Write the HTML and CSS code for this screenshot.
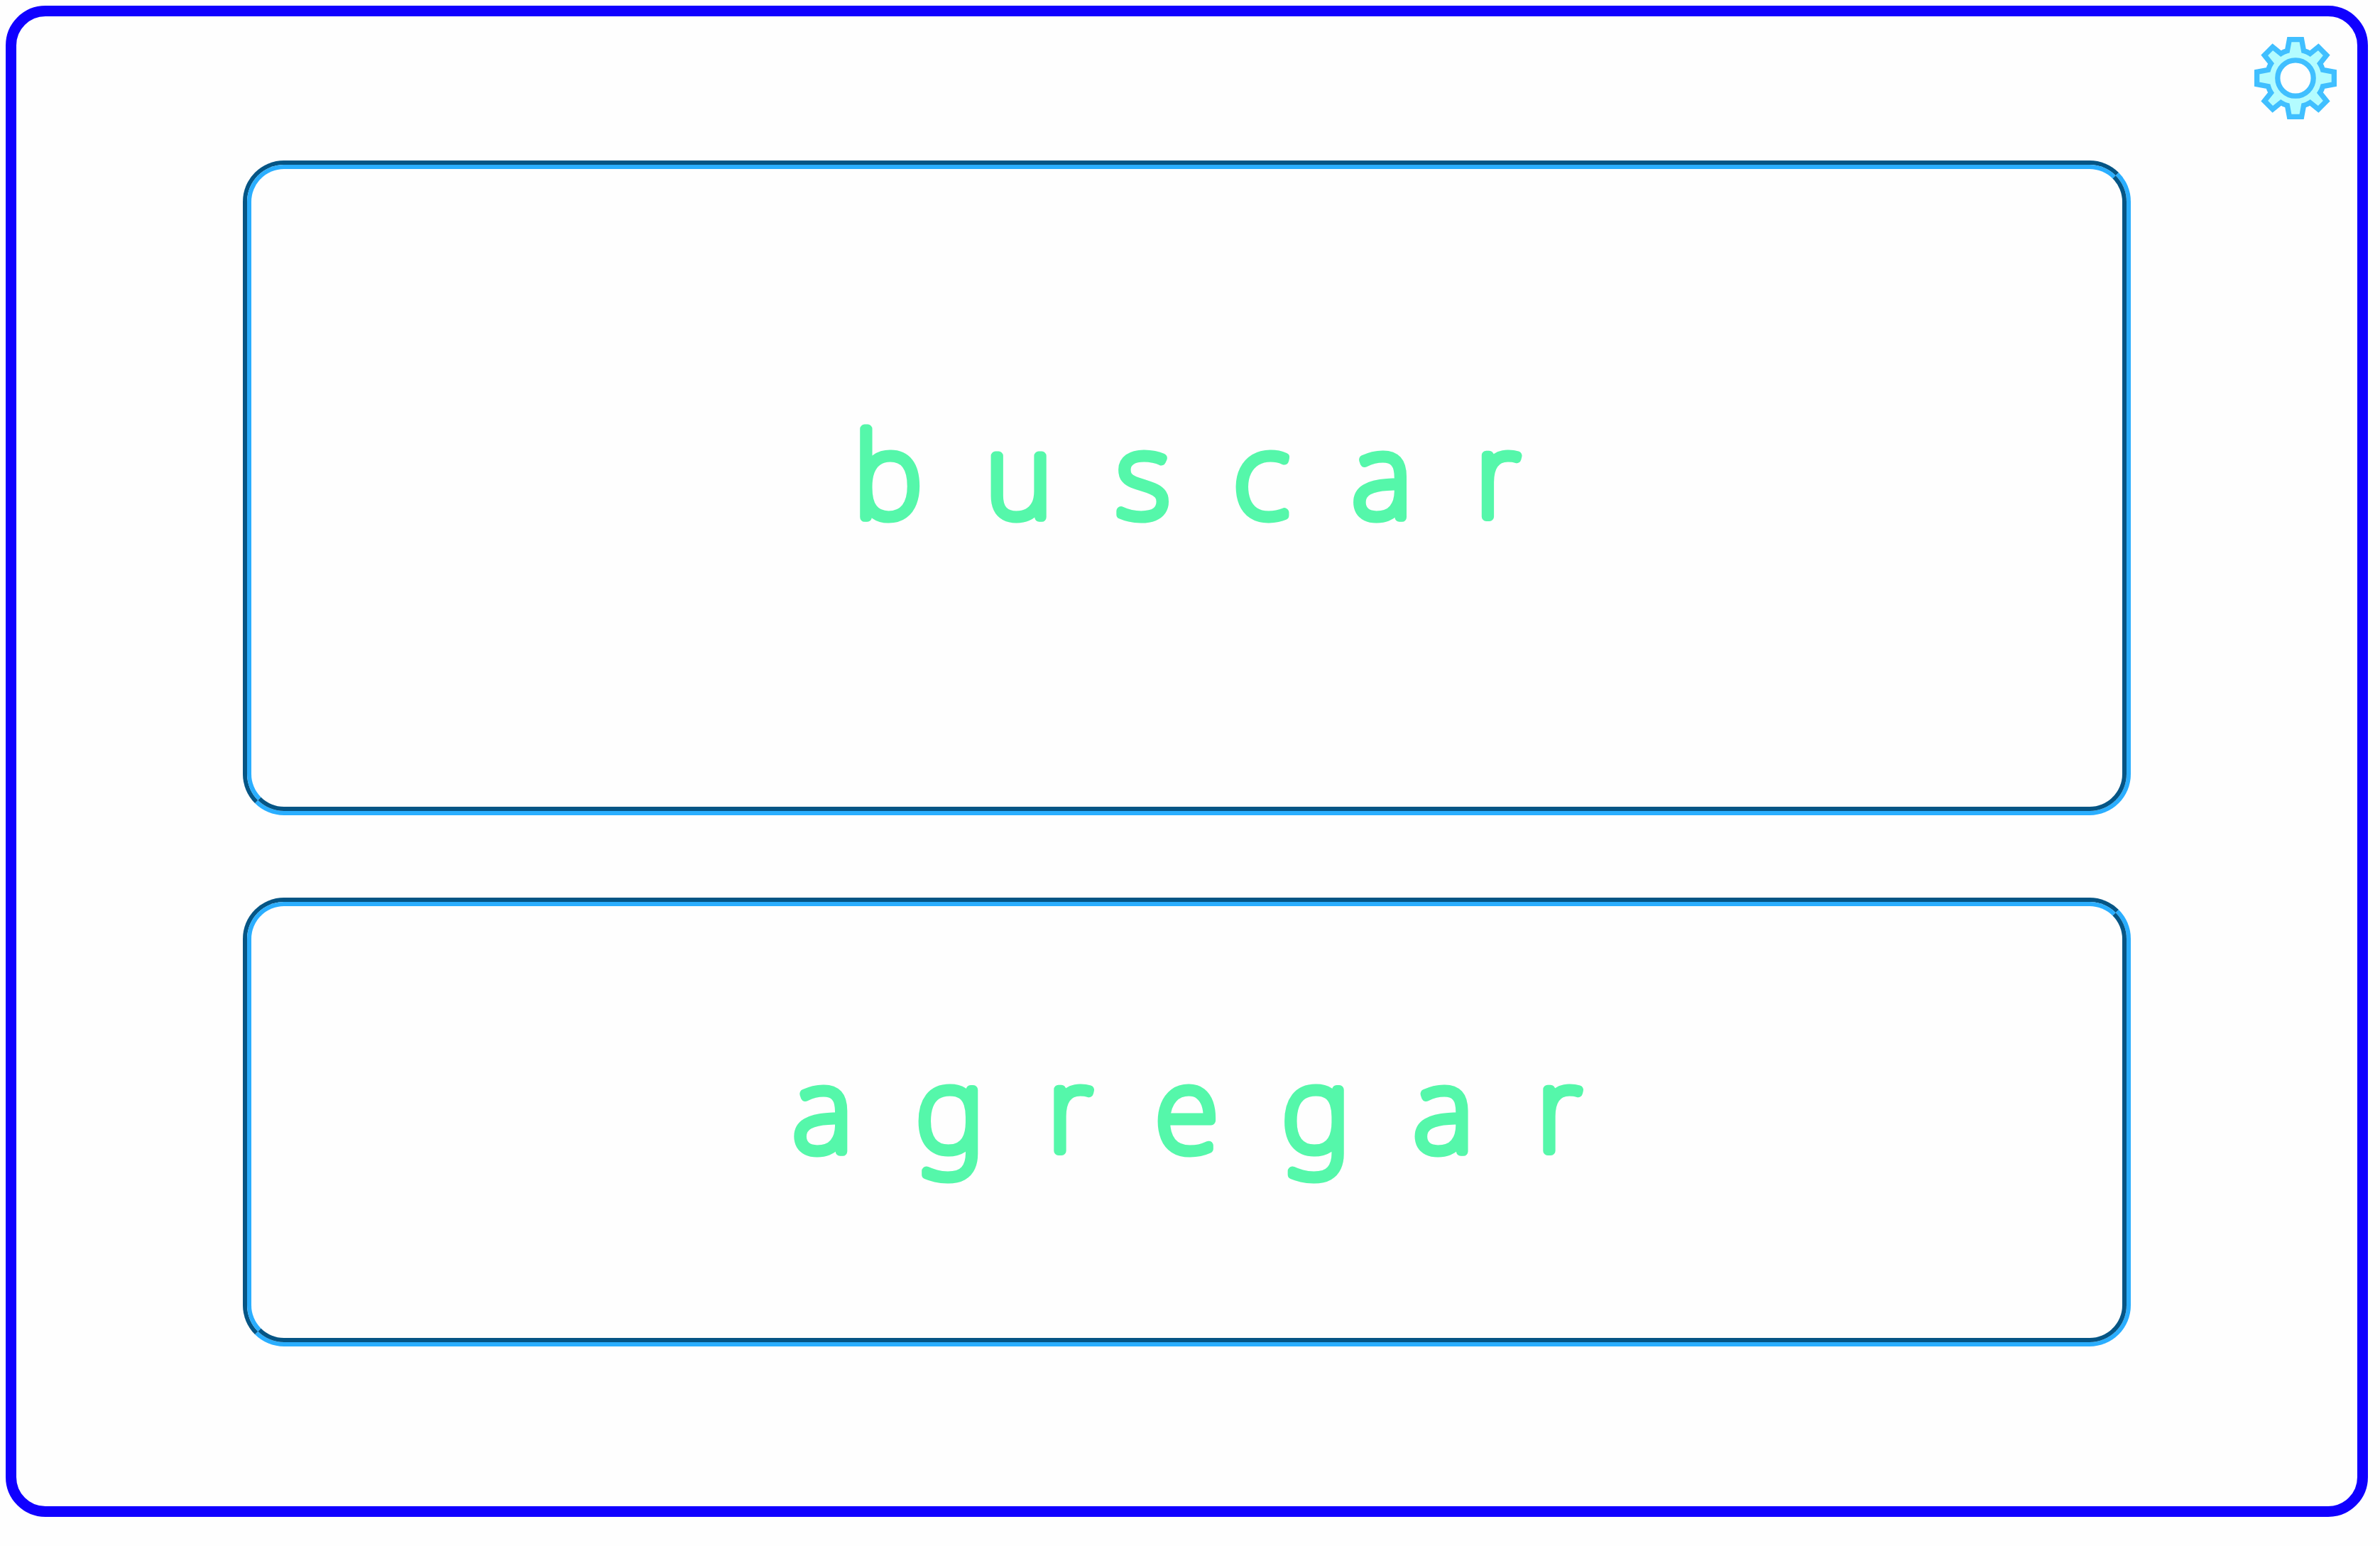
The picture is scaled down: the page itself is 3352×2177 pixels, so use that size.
FILE: index.html
```html
<!DOCTYPE html>
<html lang="es">
<head>
<meta charset="utf-8">
<meta name="viewport" content="width=device-width, initial-scale=1">
<title>Inicio</title>
<link rel="stylesheet" href="styles.css">
</head>
<body>
<main class="frame">
  <button class="settings" type="button" aria-label="ajustes">
    <svg class="gear" viewBox="-175 -175 350 350" aria-hidden="true">
      <path fill-rule="evenodd" d="M-26-164H26L35-116Q50-112 62-104L97-132L132-97L104-62Q112-50 116-35L164-26V26L116 35Q112 50 104 62L132 97L97 132L62 104Q50 112 35 116L26 164H-26L-35 116Q-50 112-62 104L-97 132L-132 97L-104 62Q-112 50-116 35L-164 26V-26L-116-35Q-112-50-104-62L-132-97L-97-132L-62-104Q-50-112-35-116ZM76 0A76 76 0 1 0-76 0A76 76 0 1 0 76 0Z"/>
    </svg>
  </button>
  <button class="card card-search" type="button">
    <svg class="label"><text x="50%" y="141">b u s c a r</text></svg>
  </button>
  <button class="card card-add" type="button">
    <svg class="label"><text x="50%" y="141">a g r e g a r</text></svg>
  </button>
</main>
</body>
</html>
```
FILE: styles.css
```css
* {
  box-sizing: border-box;
}

body {
  margin: 0;
  padding: 8px 17px 41px 8px;
  min-height: 100vh;
  display: flex;
  background: #fefefe;
}

.frame {
  position: relative;
  flex: 1;
  display: flex;
  flex-direction: column;
  align-items: center;
  gap: 116px;
  padding: 203px 0 225px;
  border: 15px solid #1000ff;
  border-radius: 56px;
}

.settings {
  position: absolute;
  top: 29px;
  right: 29px;
  padding: 0;
  border: 0;
  background: none;
  cursor: pointer;
}

.gear {
  display: block;
  width: 116px;
  height: 116px;
  fill: #b3fcff;
  stroke: #40bfff;
  stroke-width: 22;
}

/* two-tone carved edge: an outer ring and an inner ring with swapped shades */
.card {
  position: relative;
  width: 80.65%;
  padding: 0 0 0 24px;
  border: 6px solid;
  border-color: #055585 #2aaeff #2aaeff #055585;
  border-radius: 58px;
  background: none;
  cursor: pointer;
}

.card::before {
  content: "";
  position: absolute;
  inset: 0;
  border: 6px solid;
  border-color: #2aaeff #055585 #055585 #2aaeff;
  border-radius: 52px;
}

.label {
  display: block;
  width: 100%;
  height: 200px;
  overflow: visible;
  fill: #55f7aa;
  stroke: #55f7aa;
  stroke-width: 13px;
  stroke-linejoin: round;
  text-anchor: middle;
  font: 100 163px/1 "Noto Sans", Inter, sans-serif;
  letter-spacing: 24px;
}

.card-search {
  flex: 910 0 0;
}

.card-add {
  flex: 620 0 0;
}
```
